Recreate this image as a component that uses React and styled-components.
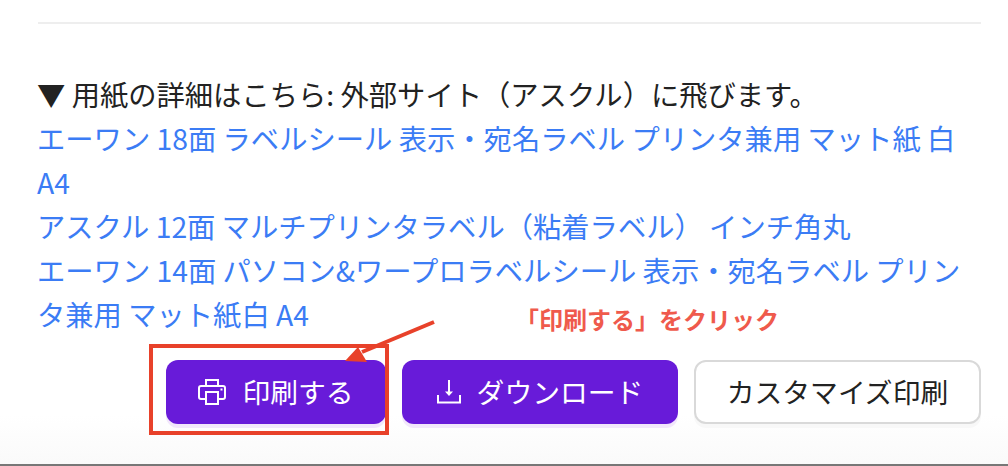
import React from 'react';
import styled, { createGlobalStyle } from 'styled-components';

const GlobalStyle = createGlobalStyle`
  html, body {
    margin: 0;
    padding: 0;
    background: #ffffff;
  }
`;

const Page = styled.div`
  position: relative;
  box-sizing: border-box;
  width: 1008px;
  height: 466px;
  overflow: hidden;
  padding: 22px 27px 0 38px;
  font-family: "Noto Sans CJK JP", "Noto Sans", sans-serif;
  font-size: 28.3px;
  line-height: 44px;
  color: #222222;
  background: linear-gradient(to bottom, #ffffff 0, #ffffff 415px, #fafafa 464px);
  border-bottom: 2px solid #777777;
`;

const Rule = styled.hr`
  margin: 0;
  border: 0;
  height: 2px;
  background: #eeeeee;
`;

const Details = styled.div`
  margin: 48px 0 0 -1px;
`;

const Heading = styled.div`
  color: #222222;
`;

const PaperRow = styled.div`
  display: block;
`;

const PaperLink = styled.a`
  color: #3b7cf5;
  text-decoration: none;
`;

const Actions = styled.div`
  display: flex;
  justify-content: flex-end;
  gap: 16px;
  margin-top: 24px;
`;

const ActionButton = styled.button`
  box-sizing: border-box;
  display: flex;
  align-items: center;
  justify-content: center;
  gap: 16px;
  width: ${(p) => p.$width}px;
  height: 64px;
  padding: 0;
  border-radius: 12px;
  font-family: inherit;
  font-size: 27.8px;
  line-height: 1;
  border: ${(p) => (p.$outline ? '2px solid #d9d9d9' : '0')};
  background: ${(p) => (p.$outline ? '#ffffff' : '#681bd9')};
  color: ${(p) => (p.$outline ? '#222222' : '#ffffff')};
  box-shadow: 0 4px 0 ${(p) => (p.$outline ? '#f8f8f8' : '#f2e7fb')};
`;

const Callout = styled.div`
  position: absolute;
  left: 515px;
  top: 303px;
  font-size: 24px;
  line-height: 32px;
  font-weight: 700;
  color: #ef5a4c;
  white-space: nowrap;
`;

const Highlight = styled.div`
  position: absolute;
  box-sizing: border-box;
  left: 149px;
  top: 344px;
  width: 240px;
  height: 91px;
  border: 4px solid #e8412a;
`;

const Arrow = styled.svg`
  position: absolute;
  left: 340px;
  top: 315px;
`;

const PrinterIcon = () => (
  <svg width="28" height="26" viewBox="0 0 28 26" fill="none" stroke="currentColor" strokeWidth="2">
    <path d="M8 7V1h12v6" />
    <rect x="1" y="7" width="26" height="13" rx="2" />
    <rect x="8" y="13" width="12" height="12" fill="#681bd9" />
    <rect x="22.5" y="9.5" width="2" height="2" fill="currentColor" stroke="none" />
  </svg>
);

const DownloadIcon = () => (
  <svg width="24" height="24" viewBox="0 0 24 24" fill="none" stroke="currentColor" strokeWidth="2">
    <path d="M12 0v13" />
    <path d="M8 11.5h8L12 16z" fill="currentColor" stroke="none" />
    <path d="M1 15v7.5h22V15" />
  </svg>
);

export default function App() {
  return (
    <Page>
      <GlobalStyle />
      <Rule />
      <Details>
        <Heading>▼ 用紙の詳細はこちら: 外部サイト（アスクル）に飛びます。</Heading>
        <PaperRow>
          <PaperLink href="#">エーワン 18面 ラベルシール 表示・宛名ラベル プリンタ兼用 マット紙 白 A4</PaperLink>
        </PaperRow>
        <PaperRow>
          <PaperLink href="#">アスクル 12面 マルチプリンタラベル（粘着ラベル） インチ角丸</PaperLink>
        </PaperRow>
        <PaperRow>
          <PaperLink href="#">エーワン 14面 パソコン&amp;ワープロラベルシール 表示・宛名ラベル プリンタ兼用 マット紙白 A4</PaperLink>
        </PaperRow>
      </Details>
      <Actions>
        <ActionButton $width={220}>
          <PrinterIcon />
          印刷する
        </ActionButton>
        <ActionButton $width={276}>
          <DownloadIcon />
          ダウンロード
        </ActionButton>
        <ActionButton $width={287} $outline>
          カスタマイズ印刷
        </ActionButton>
      </Actions>
      <Callout>「印刷する」をクリック</Callout>
      <Highlight />
      <Arrow width="100" height="50" viewBox="0 0 100 50">
        <line x1="94" y1="7" x2="22" y2="37" stroke="#e8412a" strokeWidth="4" />
        <polygon points="5,46 27,47 18,32" fill="#e8412a" />
      </Arrow>
    </Page>
  );
}
